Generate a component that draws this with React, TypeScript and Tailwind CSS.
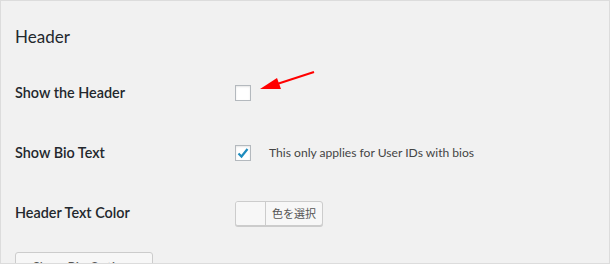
export default function App() {
  return (
    <div className="relative h-[264px] w-[610px] overflow-hidden border border-[#dcdcdc] bg-[#f1f1f1] pl-[14px] font-['Lato','Noto_Sans',sans-serif] text-[#23282d]">
      <h2 className="mt-[24px] h-[24px] text-[17px] leading-[24px]">Header</h2>

      <div className="mt-[26px] flex h-[36px] items-center">
        <div className="w-[220px] text-[14.4px] font-semibold">Show the Header</div>
        <span className="block h-4 w-4 border border-[#b4b9be] bg-white shadow-[inset_0_1px_2px_rgba(0,0,0,0.1)]" />
      </div>

      <div className="mt-[24px] flex h-[36px] items-center">
        <div className="w-[220px] text-[14.4px] font-semibold">Show Bio Text</div>
        <span className="flex h-4 w-4 items-center justify-center border border-[#b4b9be] bg-white shadow-[inset_0_1px_2px_rgba(0,0,0,0.1)]">
          <svg width="14" height="14" viewBox="0 0 14 14">
            <path d="M2.5 7.5 L5.5 10.5 L11.5 3" fill="none" stroke="#1e8cbe" strokeWidth="2.2" />
          </svg>
        </span>
        <span className="ml-[18px] text-[12.1px] text-[#444]">This only applies for User IDs with bios</span>
      </div>

      <div className="mt-[24px] flex h-[36px] items-center">
        <div className="w-[220px] text-[14.4px] font-semibold">Header Text Color</div>
        <div className="flex h-[25px] overflow-hidden rounded-[3px] border border-[#ccc] bg-[#f7f7f7] shadow-[0_1px_0_#ccc]">
          <span className="w-[30px] border-r border-[#ccc] bg-[#f7f7f7]" />
          <span className="px-[6px] font-['Noto_Sans_CJK_JP',sans-serif] text-[11px] leading-[23px] text-[#555]">色を選択</span>
        </div>
      </div>

      <button className="mt-[21px] h-[28px] w-[138px] rounded-[3px] border border-[#ccc] bg-[#f7f7f7] pt-[4px] text-[13px] text-[#555]">
        Show Bio Options
      </button>

      <svg className="absolute left-[255px] top-[66px]" width="64" height="28" viewBox="0 0 64 28">
        <line x1="58" y1="5" x2="18" y2="18" stroke="#f00" strokeWidth="2" />
        <polygon points="4,22 21,11 25,22" fill="#f00" />
      </svg>
    </div>
  );
}
